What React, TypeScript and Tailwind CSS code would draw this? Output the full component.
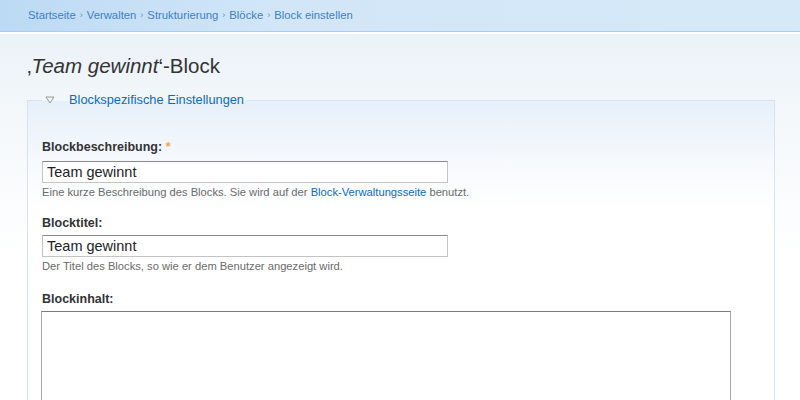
export default function App() {
  const crumbs = ["Startseite", "Verwalten", "Strukturierung", "Blöcke", "Block einstellen"]

  return (
    <div className="min-h-[400px] w-[800px] bg-[linear-gradient(to_bottom,#e7eff6_0px,#f4f8fb_120px,#ffffff_260px)] font-['Liberation_Sans',Arial,sans-serif] text-[#333]">
      {/* breadcrumb bar */}
      <div className="h-[32px] border-b border-[#a9cdee] bg-[linear-gradient(to_right,#bcdaf4,#d2e6f8_35%,#d6e9f9)] pl-[28px] flex items-center">
        <nav className="flex items-center text-[11.3px] text-[#3f7fc6]">
          {crumbs.map((c, i) => (
            <span key={c} className="flex items-center">
              {i > 0 && <span className="mx-[4px] text-[9px] text-[#6a94c2]">›</span>}
              <a href="#">{c}</a>
            </span>
          ))}
        </nav>
      </div>
      <div className="h-[2px] bg-white" />

      <div className="pl-[27px] pr-[25px]">
        <h1 className="mt-[20px] text-[20.5px] leading-[24px] text-[#333]">
          ‚<em>Team gewinnt</em>‘-Block
        </h1>

        <fieldset className="mt-[14px] border border-[#d4e4f4] bg-[linear-gradient(to_bottom,#e6f0fa_0px,#f6f9fd_60px,#ffffff_110px)] px-[14px] pb-[20px]">
          <legend className="px-[3px] text-[12.8px] leading-[16px]">
            <a href="#" className="flex items-center text-[#0a6cc0]">
              <svg width="10" height="8" viewBox="0 0 10 8" className="mr-[14px]">
                <path d="M1 1 H9 L5 7 Z" fill="none" stroke="#9a9a9a" strokeWidth="1" />
              </svg>
              Blockspezifische Einstellungen
            </a>
          </legend>

          <div className="mt-[31px]">
            <label className="block text-[12.5px] leading-[16px] font-bold text-[#333]">
              Blockbeschreibung: <span className="text-[#f7a24a]">*</span>
            </label>
            <input
              type="text"
              defaultValue="Team gewinnt"
              className="mt-[6px] block h-[22px] w-[406px] border border-[#c4c4c4] border-t-[#8a8a8a] bg-white px-[4px] text-[14.5px] text-[#222] outline-none"
            />
            <p className="mt-[2px] text-[11.2px] leading-[14px] text-[#6b6b6b]">
              Eine kurze Beschreibung des Blocks. Sie wird auf der{" "}
              <a href="#" className="text-[#0a6cc0]">Block-Verwaltungsseite</a> benutzt.
            </p>
          </div>

          <div className="mt-[16px]">
            <label className="block text-[12.5px] leading-[16px] font-bold text-[#333]">Blocktitel:</label>
            <input
              type="text"
              defaultValue="Team gewinnt"
              className="mt-[4px] block h-[22px] w-[406px] border border-[#c4c4c4] border-t-[#8a8a8a] bg-white px-[4px] text-[14.5px] text-[#222] outline-none"
            />
            <p className="mt-[2px] text-[11.2px] leading-[14px] text-[#6b6b6b]">
              Der Titel des Blocks, so wie er dem Benutzer angezeigt wird.
            </p>
          </div>

          <div className="mt-[18px]">
            <label className="block text-[12.5px] leading-[16px] font-bold text-[#333]">Blockinhalt:</label>
            <textarea className="mt-[4px] -ml-[1px] block h-[180px] w-[690px] resize-none border border-[#a8a8a8] border-t-[#7a7a7a] bg-white outline-none" />
          </div>
        </fieldset>
      </div>
    </div>
  )
}
